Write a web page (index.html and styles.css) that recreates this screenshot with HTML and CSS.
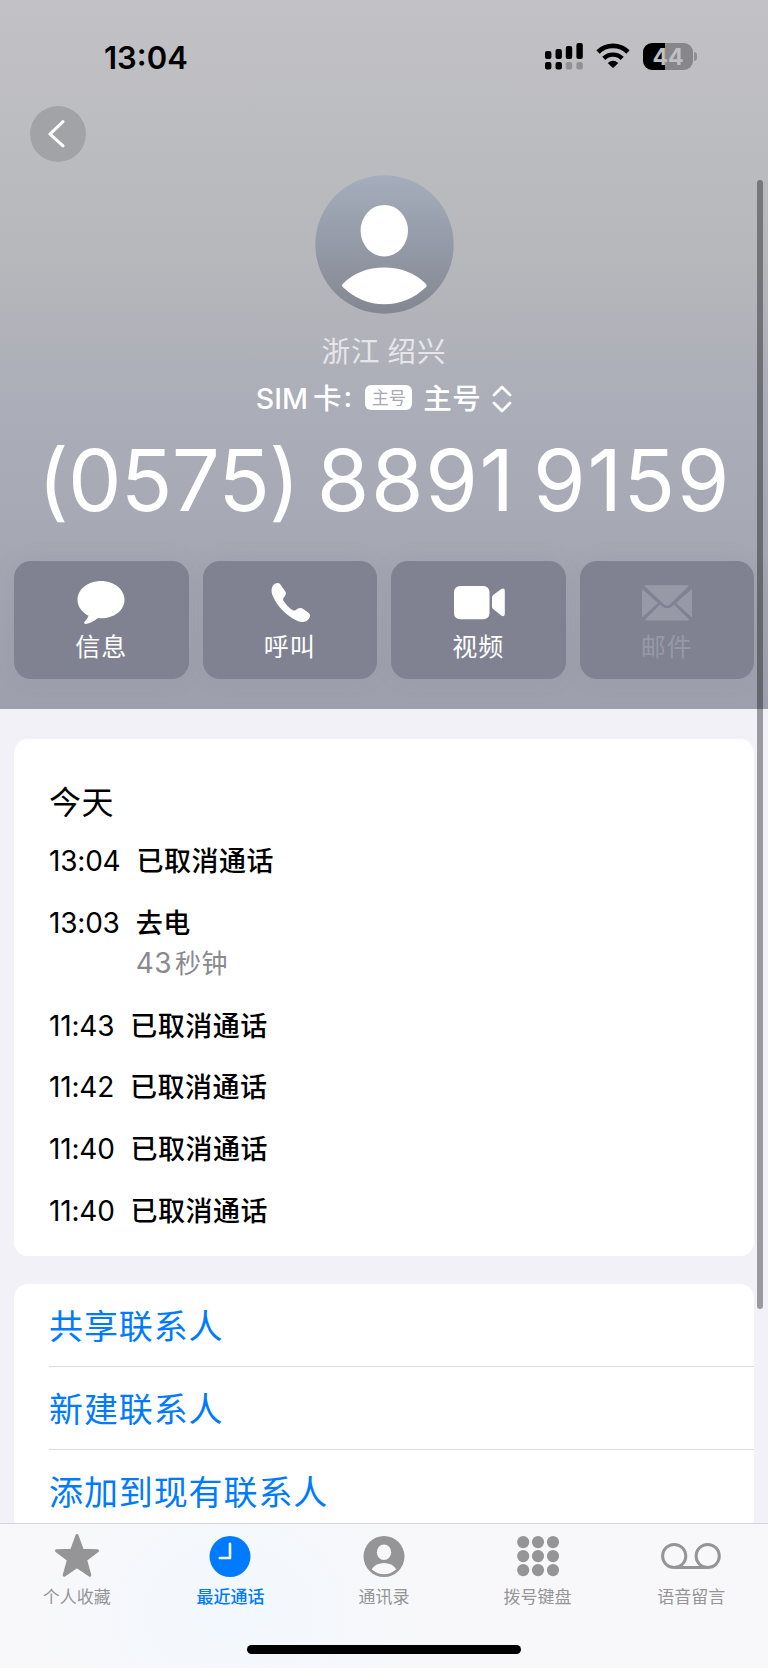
FILE: index.html
```html
<!DOCTYPE html>
<html lang="zh-CN">
<head>
    <meta charset="UTF-8">
    <meta name="viewport" content="width=device-width, initial-scale=1">
    <title>最近通话</title>
    <link rel="stylesheet" href="styles.css">
</head>
<body>
<div class="phone">
    <!-- Header: status bar, contact and quick actions -->
    <header class="header">
        <div class="status-bar">
            <span class="clock">13:04</span>
            <div class="status-icons">
                <svg class="signal" width="38" height="27" viewBox="0 0 38 27">
                    <rect x="0" y="8" width="6.4" height="8" rx="2"/>
                    <rect x="10.5" y="6" width="6.4" height="10" rx="2"/>
                    <rect x="20.8" y="3" width="6.4" height="13" rx="2"/>
                    <rect x="31.4" y="0" width="6.4" height="16" rx="2"/>
                    <rect x="0" y="19" width="6.4" height="7.4" rx="2"/>
                    <rect x="10.5" y="19" width="6.4" height="7.4" rx="2"/>
                    <rect x="20.8" y="19" width="6.4" height="7.4" rx="2" fill="#919194"/>
                    <rect x="31.4" y="19" width="6.4" height="7.4" rx="2" fill="#919194"/>
                </svg>
                <svg class="wifi" width="34" height="25" viewBox="0 0 34 25">
                    <path d="M2 8.9A21.6 21.6 0 0 1 32 8.9" fill="none" stroke="#000" stroke-width="4.8"/>
                    <path d="M7.8 15.4A13.2 13.2 0 0 1 26.2 15.4" fill="none" stroke="#000" stroke-width="4.4"/>
                    <path d="M11.7 20Q17 15.5 22.3 20L17.7 24.5Q17 25 16.3 24.5Z"/>
                </svg>
                <div class="battery"><span>44</span></div>
            </div>
        </div>

        <button class="back" aria-label="返回">
            <svg width="18" height="28" viewBox="0 0 18 28"><path d="M15 1.6L2 14.2L15 25.8" fill="none" stroke="#fff" stroke-width="3" stroke-linecap="round" stroke-linejoin="round"/></svg>
        </button>

        <svg class="avatar" width="139" height="139" viewBox="0 0 139 139">
            <defs>
                <linearGradient id="avatar-bg" x1="0" y1="0" x2="0" y2="1">
                    <stop offset="0" stop-color="#a5adbc"/>
                    <stop offset="1" stop-color="#838791"/>
                </linearGradient>
            </defs>
            <circle cx="69.5" cy="69.5" r="69.2" fill="url(#avatar-bg)"/>
            <ellipse cx="69.3" cy="55.7" rx="23.7" ry="25.8" fill="#fff"/>
            <path d="M27.5 111.8Q26 110.8 27.6 109Q44 92.5 69.3 92.5T111 109Q112.6 110.8 111.1 112Q93 129.3 69.3 129.3T27.5 111.8Z" fill="#fff"/>
        </svg>

        <div class="region">浙江 绍兴</div>
        <div class="sim">
            <span class="sim-label">SIM</span>
            <span class="sim-card">卡</span>
            <span class="sim-colon">:</span>
            <span class="sim-badge">主号</span>
            <span class="sim-name">主号</span>
            <svg width="20" height="28" viewBox="0 0 20 28"><path d="M2 10L10 2L18 10M2 18L10 26L18 18" fill="none" stroke="#fff" stroke-width="2.7" stroke-linecap="round" stroke-linejoin="round"/></svg>
        </div>
        <h1 class="number"><span class="area-code">(0575)</span> 8891 9159</h1>

        <div class="quick-actions">
            <button class="quick">
                <svg width="52" height="50" viewBox="0 0 52 50"><path d="M26 3C39 3 49.5 11.3 49.5 21.8S39.5 40.3 26 40.3Q24.5 40.3 23.2 40C19 43 14 45.7 10.8 45.9C8.8 46 8.9 44.3 10 43.2Q12.5 40.7 13.6 37.8C7 34.5 2.5 28.7 2.5 21.8C2.5 11.3 13 3 26 3Z"/></svg>
                <span>信息</span>
            </button>
            <button class="quick">
                <svg width="52" height="50" viewBox="0 0 52 50"><path d="M9.6 6.8C11.6 4.7 14.5 4.1 16.4 6.5L21 13.1C22.3 15 22.2 16.5 20.6 18.5C19.1 20.3 18.5 21.2 19.7 23C22 26.6 24.9 29.7 28.4 32C30 33.1 31 32.7 33.2 31.1C35.3 29.6 37 29.5 38.9 30.8L44.4 34.7C46.6 36.3 46.7 38.2 45.2 40.3C42.2 44.7 37.8 44.9 33 42.7C22.6 37.9 13.3 28.5 8.9 18.2C6.9 13.6 7.2 9.4 9.6 6.8Z"/></svg>
                <span>呼叫</span>
            </button>
            <button class="quick">
                <svg width="52" height="50" viewBox="-1.5 0 52 50" overflow="visible"><rect x="0.5" y="8" width="35.5" height="33.3" rx="6"/><path d="M38.5 19.5Q38.5 18 39.6 17L47.2 11.4Q51.3 9.2 51.3 13V35.6Q51.3 39.5 47.8 37.5L39.6 31Q38.5 30 38.5 28.5Z"/></svg>
                <span>视频</span>
            </button>
            <button class="quick disabled">
                <svg width="52" height="50" viewBox="0 0 52 50"><path d="M4 7.2H47.5Q48.5 7.2 47.7 8L30 25.5Q26 30 22 25.5L3.5 8Q3 7.2 4 7.2Z"/><path d="M1 11L17 25L1 39.5ZM51 11L35 25L51 39.5ZM19 26.5L20.8 28.2Q26 32.5 31.2 28.2L33 26.5L48 41.5Q47.5 42.4 46 42.4H6Q4.5 42.4 4 41.5Z"/></svg>
                <span>邮件</span>
            </button>
        </div>
    </header>

    <!-- Call log and contact options -->
    <main class="content">
        <section class="card calls">
            <h2>今天</h2>
            <div class="call"><time>13:04</time><span>已取消通话</span></div>
            <div class="call with-duration"><time>13:03</time><span>去电<small>43<i>秒钟</i></small></span></div>
            <div class="call"><time>11:43</time><span>已取消通话</span></div>
            <div class="call"><time>11:42</time><span>已取消通话</span></div>
            <div class="call"><time>11:40</time><span>已取消通话</span></div>
            <div class="call"><time>11:40</time><span>已取消通话</span></div>
        </section>
        <section class="card options">
            <a class="option">共享联系人</a>
            <a class="option">新建联系人</a>
            <a class="option">添加到现有联系人</a>
        </section>
    </main>

    <!-- Tab bar -->
    <nav class="tab-bar">
        <div class="tabs">
            <a class="tab">
                <svg width="60" height="46" viewBox="0 0 60 46"><path d="M30 2.5L35.4 17.2L50.5 17.7L38.6 26.8L42.8 42.2L30 33.5L17.2 42.2L21.4 26.8L9.5 17.7L24.6 17.2Z" stroke="currentColor" stroke-width="3" stroke-linejoin="round"/></svg>
                <span>个人收藏</span>
            </a>
            <a class="tab active">
                <svg width="60" height="46" viewBox="0 0 60 46"><circle cx="30" cy="23.5" r="20.5"/><path d="M30 10.8V25H19.8" fill="none" stroke="#f7fbff" stroke-width="2.6" stroke-linecap="round" stroke-linejoin="round"/></svg>
                <span>最近通话</span>
            </a>
            <a class="tab">
                <svg width="60" height="46" viewBox="0 0 60 46"><circle cx="30" cy="23.5" r="20.5"/><ellipse cx="30" cy="19.3" rx="7.2" ry="7.8" fill="#f8f8f9"/><path d="M17.7 36.3Q22 30 30 30T42.3 36.3Q37 41.3 30 41.3T17.7 36.3Z" fill="#f8f8f9"/></svg>
                <span>通讯录</span>
            </a>
            <a class="tab">
                <svg width="60" height="46" viewBox="0 0 60 46">
                    <circle cx="15.2" cy="9.1" r="6.1"/><circle cx="30" cy="9.1" r="6.1"/><circle cx="45" cy="9.1" r="6.1"/>
                    <circle cx="15.2" cy="23.1" r="6.1"/><circle cx="30" cy="23.1" r="6.1"/><circle cx="45" cy="23.1" r="6.1"/>
                    <circle cx="15.2" cy="37.1" r="6.1"/><circle cx="30" cy="37.1" r="6.1"/><circle cx="45" cy="37.1" r="6.1"/>
                </svg>
                <span>拨号键盘</span>
            </a>
            <a class="tab">
                <svg width="60" height="46" viewBox="0 0 60 46"><g fill="none" stroke="currentColor" stroke-width="3"><circle cx="13.2" cy="23" r="11.6"/><circle cx="46.7" cy="23" r="11.6"/><path d="M13.2 34.6H46.7"/></g></svg>
                <span>语音留言</span>
            </a>
        </div>
        <div class="home-indicator"></div>
    </nav>

    <div class="scrollbar"></div>
</div>
</body>
</html>
```
FILE: styles.css
```css
/* General Styling */
* {
    box-sizing: border-box;
}

body {
    margin: 0;
    background: #fff;
    font-family: Inter, 'Noto Sans CJK SC', sans-serif;
    color: #000;
}

button {
    border: 0;
    padding: 0;
    font-family: inherit;
}

svg {
    display: block;
    flex: none;
}

.phone {
    position: relative;
    display: flex;
    flex-direction: column;
    width: 768px;
    height: 1669px;
    overflow: hidden;
    background: #f2f1f8;
}

/* Header */
.header {
    display: flex;
    flex-direction: column;
    align-items: center;
    flex: none;
    height: 709px;
    background: linear-gradient(#c2c2c6 0%, #b6b7bb 38%, #abadb8 57%, #a6a8b4 75%, #9d9fac 100%);
    color: #fff;
}

.status-bar {
    display: flex;
    justify-content: space-between;
    align-self: stretch;
    height: 106px;
    padding: 38px 70px 0 104px;
    color: #000;
}

.clock {
    font-size: 31px;
    font-weight: 600;
    line-height: 39px;
}

.status-icons {
    display: flex;
    align-items: flex-start;
    padding-top: 5px;
}

.wifi {
    margin-left: 13px;
}

.battery {
    position: relative;
    width: 50px;
    height: 27px;
    margin: 0 5px 0 13px;
    border-radius: 9px;
    background: linear-gradient(90deg, #000 44%, #87878b 44%);
    color: #c0c0c4;
    font-size: 23px;
    font-weight: 700;
    line-height: 28px;
    text-align: center;
}

.battery::after {
    content: '';
    position: absolute;
    right: -4px;
    top: 9px;
    width: 3px;
    height: 9px;
    border-radius: 0 4px 4px 0;
    background: #919195;
}

.back {
    display: flex;
    align-items: center;
    align-self: flex-start;
    flex: none;
    width: 56px;
    height: 56px;
    margin-left: 30px;
    padding-left: 18px;
    border-radius: 50%;
    background: #a2a3a7;
}

.avatar {
    margin-top: 13px;
}

.region {
    height: 40px;
    margin-top: 18px;
    color: #e6e6ea;
    font-size: 28.5px;
    line-height: 40px;
    letter-spacing: 1px;
    word-spacing: -2px;
    white-space: pre;
}

.sim {
    display: flex;
    align-items: center;
    height: 40px;
    margin-top: 7px;
    font-size: 28.5px;
    font-weight: 500;
    line-height: 40px;
}

.sim-card {
    margin-left: 5px;
}

.sim-colon {
    margin-left: 2px;
    padding-bottom: 4px;
}

.sim-badge {
    width: 47px;
    height: 25px;
    margin: -4px 11px 0 13px;
    border-radius: 6px;
    background: #fff;
    color: #a5a7b2;
    font-size: 17px;
    font-weight: 400;
    line-height: 26px;
    text-align: center;
}

.sim-name {
    margin-right: 11px;
    letter-spacing: 0.5px;
}

.number {
    height: 100px;
    margin: 12px 0 0 1px;
    font-size: 85px;
    font-weight: 400;
    line-height: 100px;
    letter-spacing: 1.6px;
    word-spacing: -8px;
    font-feature-settings: 'calt' 0;
    white-space: nowrap;
}

.area-code {
    letter-spacing: -0.8px;
}

.quick-actions {
    display: grid;
    grid-template-columns: repeat(4, 1fr);
    gap: 14px;
    align-self: stretch;
    margin-top: 30px;
    padding: 0 14px;
}

.quick {
    display: flex;
    flex-direction: column;
    align-items: center;
    height: 118px;
    padding-top: 17px;
    border-radius: 17px;
    background: #808292;
    box-shadow: 0 0 22px rgba(110, 112, 130, 0.1);
    color: #fff;
    font-size: 25px;
    line-height: 39px;
    letter-spacing: 1px;
}

.quick svg {
    fill: currentColor;
}

.quick.disabled {
    color: #9799a7;
}

/* Content cards */
.content {
    flex: none;
    height: 814px;
    padding: 30px 14px 0;
    overflow: hidden;
}

.card {
    border-radius: 14px;
    background: #fff;
}

.calls {
    height: 517px;
    padding: 40px 36px 0 35px;
}

.calls h2 {
    margin: 0;
    height: 52px;
    font-size: 32px;
    font-weight: 400;
    line-height: 48px;
    letter-spacing: 0.5px;
}

.call {
    display: flex;
    align-items: flex-start;
    height: 61.7px;
    font-size: 28px;
    line-height: 61.7px;
}

.call time {
    letter-spacing: -0.2px;
}

.call span {
    margin-left: 16px;
    font-size: 27px;
    font-weight: 500;
    letter-spacing: 0.5px;
}

.with-duration {
    height: 103px;
}

.call small {
    display: block;
    margin-top: -11px;
    color: #8a8a8e;
    font-size: 28px;
    font-weight: 400;
    line-height: 41px;
}

.call i {
    margin-left: 3px;
    font-size: 26px;
    font-style: normal;
}

.options {
    margin-top: 28px;
    padding-left: 35px;
}

.option {
    display: block;
    height: 83px;
    padding-top: 2px;
    border-bottom: 1px solid #dddddf;
    color: #007aff;
    font-size: 34px;
    line-height: 82px;
    letter-spacing: 0.9px;
}

/* Tab bar */
.tab-bar {
    flex: none;
    height: 146px;
    border-top: 1px solid #d6d6d9;
    border-bottom: 1px solid #fff;
    background: radial-gradient(ellipse 190px 160px at 230px 90px, #f2f8fe, #f8f8fa);
}

.tabs {
    display: grid;
    grid-template-columns: repeat(5, 1fr);
}

.tab {
    display: flex;
    flex-direction: column;
    align-items: center;
    height: 121px;
    padding-top: 9px;
    color: #959597;
    font-size: 17px;
    line-height: 36px;
}

.tab svg {
    fill: currentColor;
}

.tab.active {
    color: #007aff;
    font-weight: 500;
}

.home-indicator {
    width: 274px;
    height: 9px;
    margin: 0 auto;
    border-radius: 5px;
    background: #000;
}

/* Scroll position, floats above the page */
.scrollbar {
    position: absolute;
    top: 180px;
    right: 5px;
    width: 6px;
    height: 1129px;
    border-radius: 3px;
    background: rgba(0, 0, 0, 0.36);
}
```
